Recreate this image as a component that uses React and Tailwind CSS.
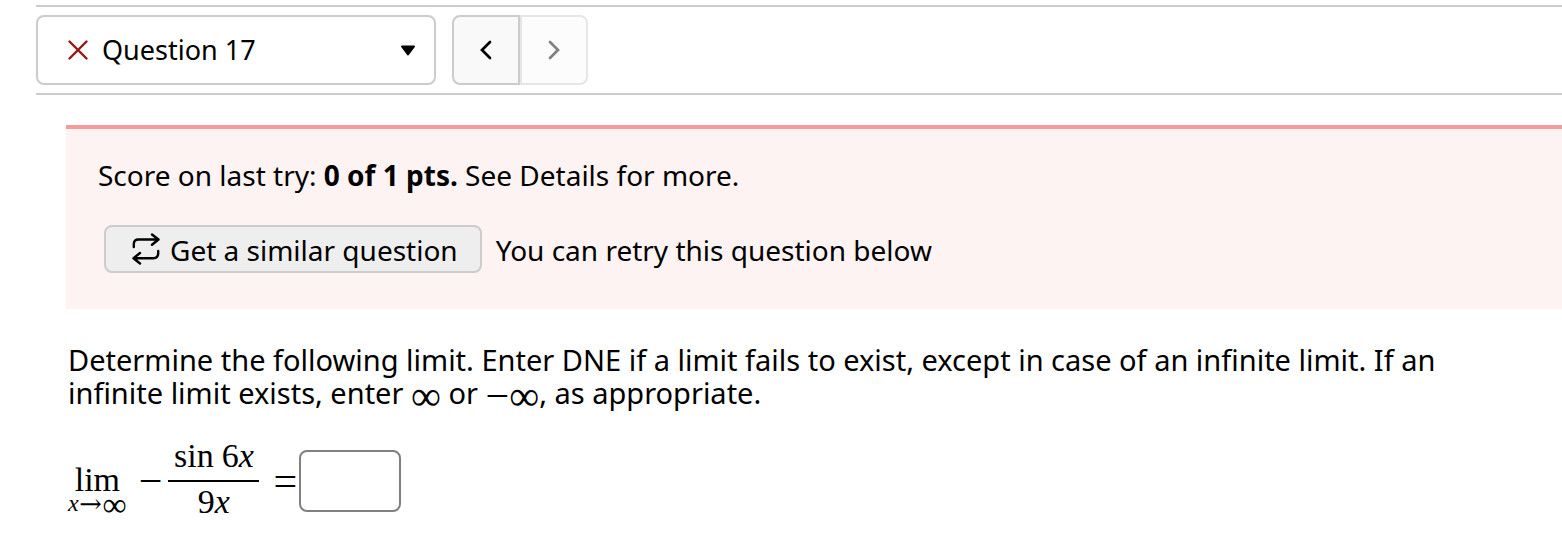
import React from "react";

function Cross() {
  return (
    <svg aria-hidden="true" viewBox="0 0 20 20" className="size-5 shrink-0" fill="none" stroke="#8f1a12" strokeWidth="2.4" strokeLinecap="round">
      <path d="M1.500 1.500 18.500 18.500M18.500 1.500 1.500 18.500" />
    </svg>
  );
}

function Chevron({ left }) {
  return (
    <svg aria-hidden="true" viewBox="0 0 12 20" className="h-5 w-3" fill="none" stroke="currentColor" strokeWidth="2.7" strokeLinecap="round">
      <path d={left ? "M10 2 2 10 10 18" : "M2 2 10 10 2 18"} />
    </svg>
  );
}

function RetryIcon() {
  return (
    <svg aria-hidden="true" viewBox="0 0 28 32" className="h-8 w-7 shrink-0" fill="none" stroke="currentColor" strokeWidth="2.400" strokeLinecap="round" strokeLinejoin="round">
      <path d="M1.800 14V11Q1.800 6.500 6.500 6.500H26M20 1.500 26.500 6.500 20 11.800" />
      <path d="M26.200 18V20Q26.200 25.200 21.500 25.200H2M8 20 1.500 25.200 8 30.500" />
    </svg>
  );
}

function X() {
  return <i className="italic">x</i>;
}

function Infinite({ negative }) {
  return (
    <span className="align-middle font-['Liberation_Serif',serif] text-[42px] leading-0">{negative ? "−∞" : "∞"}</span>
  );
}

export default function App() {
  return (
    <main className="bg-white pt-[5px] pl-9 font-['Noto_Sans',sans-serif] text-[28px] leading-8 text-black">
      <nav className="flex gap-4 border-y-2 border-[#cccccc] py-2">
        <div className="flex h-[70px] w-[400px] items-center gap-3.5 rounded-lg border-2 border-[#cccccc] pr-[18px] pl-[30px]">
          <Cross />
          <select aria-label="Question" className="h-full min-w-0 grow appearance-none bg-transparent text-[27px]">
            <option>Question 17</option>
          </select>
          <svg aria-hidden="true" viewBox="0 0 16 12" className="h-3 w-4 shrink-0">
            <path d="M2 2.500H14L8 10.500Z" stroke="black" strokeWidth="2" strokeLinejoin="round" />
          </svg>
        </div>
        <div className="flex">
          <button aria-label="Previous question" className="flex h-[70px] w-[68px] items-center justify-center rounded-l-lg border-2 border-[#cccccc] bg-[#f9f9f9]">
            <Chevron left />
          </button>
          <button aria-label="Next question" disabled className="flex h-[70px] w-[68px] items-center justify-center rounded-r-lg border-2 border-[#e6e6e6] bg-[#fcfcfc] text-[#808080]">
            <Chevron />
          </button>
        </div>
      </nav>

      <section className="mt-[30px] ml-[30px] border-t-4 border-[#f49c9c] bg-[#fdf3f2] px-8 pt-[30px] pb-9">
        <p>
          Score on last try: <strong>0 of 1 pts.</strong> See Details for more.
        </p>
        <div className="mt-[34px] ml-1.5 flex items-center gap-3.5">
          <button className="flex h-12 shrink-0 items-center gap-2.5 rounded-lg border-2 border-[#cccccc] bg-[#eeeeee] pr-[22px] pl-[26px] whitespace-nowrap">
            <RetryIcon />
            <span className="pt-0.5">Get a similar question</span>
          </button>
          <span className="pt-0.5">You can retry this question below</span>
        </div>
      </section>

      <section className="mt-[34px] ml-8 pb-4">
        <p className="max-w-[1400px] text-[29px] leading-[33px]">
          Determine the following limit. Enter DNE if a limit fails to exist, except in case of an infinite limit. If an
          infinite limit exists, enter <Infinite /> or <Infinite negative />, as appropriate.
        </p>

        <div className="mt-[31px] flex items-center font-['Liberation_Serif',serif] text-[34px]">
          <div className="flex flex-col items-center pt-3">
            <span className="leading-8">lim</span>
            <span className="text-2xl leading-[14px] whitespace-nowrap">
              <X />
              <span className="font-['DejaVu_Math_TeX_Gyre','DejaVu_Serif',serif] leading-0">→</span>
              <span className="align-middle text-[34px] leading-0">∞</span>
            </span>
          </div>
          <span className="ml-3 text-[42px] leading-8">−</span>
          <div className="ml-1.5 flex w-[91px] flex-col items-center">
            <span className="flex gap-2 pb-2 leading-8">
              <span>sin</span>
              <span>6<X /></span>
            </span>
            <span className="flex w-full justify-center border-t-2 border-black pt-1 pb-1 leading-8">
              <span>9<X /></span>
            </span>
          </div>
          <span className="ml-3.5 text-[42px] leading-8">=</span>
          <input aria-label="Answer" type="text" className="ml-0.5 h-[62px] w-[102px] rounded-lg border-2 border-[#808080] px-2" />
        </div>
      </section>
    </main>
  );
}
